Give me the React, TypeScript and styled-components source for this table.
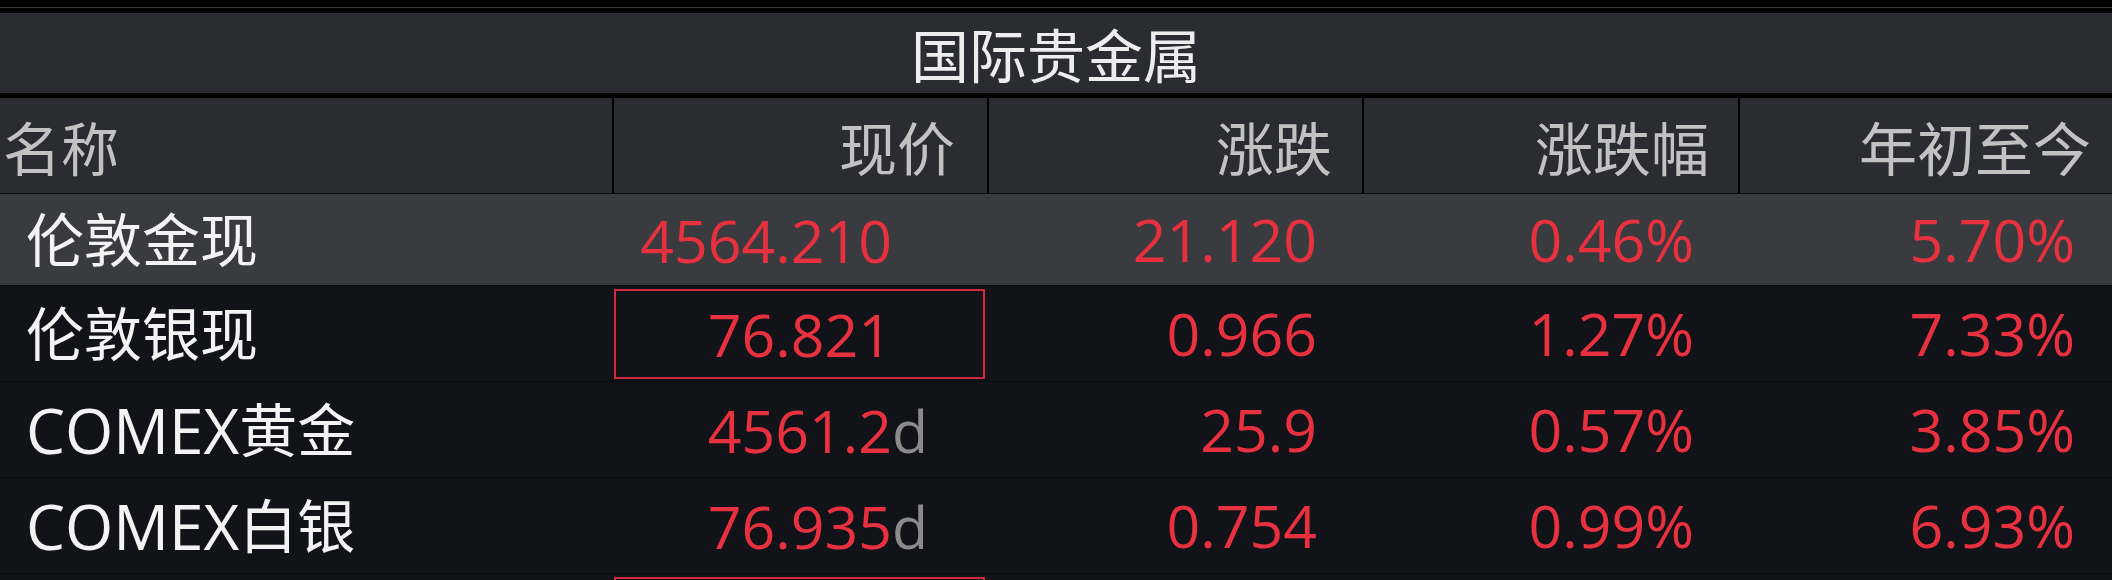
import React from "react";
import styled, { createGlobalStyle } from "styled-components";

const GlobalStyle = createGlobalStyle`
  html, body {
    margin: 0;
    padding: 0;
    background: #000;
  }
  body {
    font-family: "Open Sans", "Noto Sans CJK SC", sans-serif;
    overflow: hidden;
  }
`;

const COLS = "612px 373px 373px 374px 1fr";

const Page = styled.div`
  width: 2112px;
  height: 580px;
  background: #000;
  overflow: hidden;
  display: flex;
  flex-direction: column;
`;

const TopRule = styled.div`
  height: 1px;
  margin: 7px 0 5px;
  background: #3a3b40;
  flex-shrink: 0;
`;

const Title = styled.div`
  flex-shrink: 0;
  height: 80px;
  margin-bottom: 5px;
  background: #2b2c31;
  display: flex;
  align-items: center;
  justify-content: center;
  color: #ededed;
  font-family: "Noto Sans CJK SC", sans-serif;
  font-size: 58px;
  line-height: 1;
`;

const HeaderRow = styled.div`
  flex-shrink: 0;
  display: grid;
  grid-template-columns: ${COLS};
  column-gap: 2px;
  height: 95px;
  background: #000;
`;

const HeaderCell = styled.div<{ $left?: boolean; $pad: number }>`
  background: #2b2c31;
  display: flex;
  align-items: center;
  justify-content: ${(p) => (p.$left ? "flex-start" : "flex-end")};
  padding: ${(p) => (p.$left ? `0 0 0 ${p.$pad}px` : `0 ${p.$pad}px 0 0`)};
  color: #c2c2c2;
  font-family: "Noto Sans CJK SC", sans-serif;
  font-size: 58px;
  line-height: 1;
`;

const DataRow = styled.div<{ $selected?: boolean; $height: number }>`
  flex-shrink: 0;
  display: grid;
  grid-template-columns: ${COLS};
  column-gap: 2px;
  height: ${(p) => p.$height}px;
  box-sizing: border-box;
  border-top: 1px solid #0a0b0e;
  background: ${(p) => (p.$selected ? "#3a3b3f" : "#121318")};
`;

const NameCell = styled.div`
  display: flex;
  align-items: center;
  padding-left: 26px;
  color: #f3f3f3;
  font-size: 58px;
  line-height: 1;
  white-space: nowrap;
`;

const Latin = styled.span`
  font-family: "Open Sans", sans-serif;
  font-size: 62px;
`;

const PriceCell = styled.div<{ $boxed?: boolean }>`
  display: flex;
  align-items: center;
  justify-content: flex-end;
  margin: 3px 2px 2px 0;
  border: 2px solid ${(p) => (p.$boxed ? "#d12a3b" : "transparent")};
  padding-right: 53px;
  color: #e7313f;
  font-size: 59px;
  line-height: 1;
  white-space: nowrap;
`;

const Suffix = styled.span`
  display: inline-block;
  width: 38px;
  color: #8b8b8b;
`;

const ValueCell = styled.div<{ $pad: number }>`
  display: flex;
  align-items: center;
  justify-content: flex-end;
  padding-right: ${(p) => p.$pad}px;
  color: #e7313f;
  font-size: 59px;
  line-height: 1;
  white-space: nowrap;
`;

type Row = {
  latin?: string;
  name: string;
  price: string;
  suffix?: string;
  change: string;
  pct: string;
  ytd: string;
  selected?: boolean;
  boxed?: boolean;
};

const rows: Row[] = [
  { name: "伦敦金现", price: "4564.210", change: "21.120", pct: "0.46%", ytd: "5.70%", selected: true },
  { name: "伦敦银现", price: "76.821", change: "0.966", pct: "1.27%", ytd: "7.33%", boxed: true },
  { latin: "COMEX", name: "黄金", price: "4561.2", suffix: "d", change: "25.9", pct: "0.57%", ytd: "3.85%" },
  { latin: "COMEX", name: "白银", price: "76.935", suffix: "d", change: "0.754", pct: "0.99%", ytd: "6.93%" },
  { name: "", price: "", change: "", pct: "", ytd: "", boxed: true },
];

const headers = [
  { label: "名称", left: true, pad: 3 },
  { label: "现价", pad: 32 },
  { label: "涨跌", pad: 30 },
  { label: "涨跌幅", pad: 29 },
  { label: "年初至今", pad: 21 },
];

export default function App() {
  return (
    <>
      <GlobalStyle />
      <Page>
        <TopRule />
        <Title>国际贵金属</Title>
        <HeaderRow>
          {headers.map((h) => (
            <HeaderCell key={h.label} $left={h.left} $pad={h.pad}>
              {h.label}
            </HeaderCell>
          ))}
        </HeaderRow>
        {rows.map((r, i) => (
          <DataRow key={i} $selected={r.selected} $height={i === 0 ? 92 : 96}>
            <NameCell>
              {r.latin && <Latin>{r.latin}</Latin>}
              {r.name}
            </NameCell>
            <PriceCell $boxed={r.boxed}>
              {r.price}
              <Suffix>{r.suffix ?? ""}</Suffix>
            </PriceCell>
            <ValueCell $pad={45}>{r.change}</ValueCell>
            <ValueCell $pad={44}>{r.pct}</ValueCell>
            <ValueCell $pad={37}>{r.ytd}</ValueCell>
          </DataRow>
        ))}
      </Page>
    </>
  );
}
